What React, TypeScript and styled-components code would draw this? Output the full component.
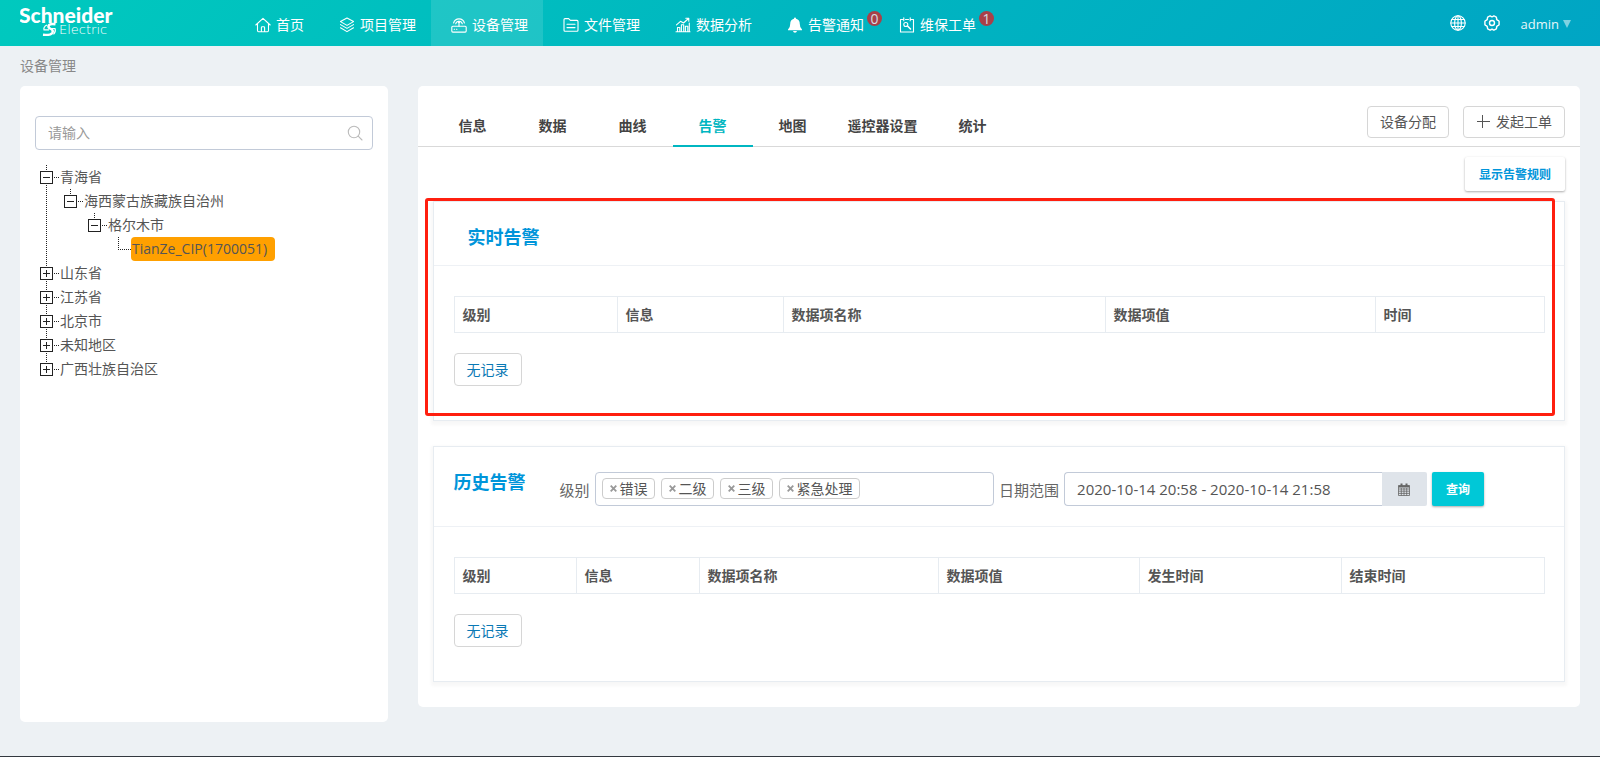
import React from "react";
import styled, { createGlobalStyle } from "styled-components";

const GlobalStyle = createGlobalStyle`
  * { box-sizing: border-box; }
  body {
    margin: 0;
    background: #edf1f4;
    color: #555;
    font: 14px/20px "Open Sans", "Noto Sans CJK SC", sans-serif;
  }
  button, input { font: inherit; color: inherit; }
  button { cursor: pointer; }
  a { color: inherit; text-decoration: none; }
  h2, ul { margin: 0; padding: 0; }
  ul { list-style: none; }
`;

/* ---------- page frame ---------- */

const Page = styled.div`
  min-height: 100vh;
  display: flex;
  flex-direction: column;
`;

const Header = styled.header`
  height: 46px;
  display: flex;
  align-items: stretch;
  padding: 0 29px 0 20px;
  color: #fff;
  background: linear-gradient(135deg, #00c9be 0%, #00b6c0 50%, #00a5c4 100%);
`;

const Brand = styled.a`
  width: 215px;
  flex: none;
`;

const Nav = styled.nav`
  display: flex;
  flex: 1;
`;

const NavLink = styled.a<{ $active?: boolean }>`
  display: flex;
  align-items: center;
  gap: 5px;
  padding: 4px 15px 0 20px;
  white-space: nowrap;
  background: ${(p) => (p.$active ? "rgba(255, 255, 255, 0.12)" : "none")};
  svg { flex: none; }
`;

const NavLabel = styled.span`
  position: relative;
`;

const Badge = styled.span`
  position: absolute;
  left: 100%;
  top: -4px;
  margin-left: 3px;
  width: 15px;
  height: 15px;
  border-radius: 8px;
  background: #a94048;
  color: #d5dde2;
  font-size: 14px;
  line-height: 15px;
  text-align: center;
`;

const UserTools = styled.div`
  display: flex;
  align-items: center;
  gap: 18px;
`;

const IconButton = styled.button`
  display: flex;
  padding: 0;
  border: 0;
  background: none;
  color: #fff;
`;

const UserMenu = styled(IconButton)`
  align-items: center;
  gap: 4px;
  padding-top: 2px;
  margin-left: 3px;
  font-size: 13px;
  color: #e6f7fa;
`;

const Breadcrumb = styled.div`
  padding: 10px 20px;
  color: #888;
`;

const Columns = styled.main`
  flex: 1;
  display: grid;
  grid-template-columns: minmax(0, 1fr) minmax(0, 3fr);
  align-items: start;
  padding: 0 5px;
`;

const Column = styled.div`
  padding: 0 15px;
`;

const Sidebar = styled.aside`
  min-height: calc(100vh - 121px);
  padding: 30px 15px;
  border-radius: 5px;
  background: #fff;
`;

const Footer = styled.footer`
  height: 1px;
  background: #33383f;
`;

/* ---------- device tree ---------- */

const SearchBox = styled.label`
  display: flex;
  align-items: center;
  height: 34px;
  margin-bottom: 15px;
  padding: 0 9px 0 12px;
  border: 1px solid #c2cad8;
  border-radius: 4px;
  color: #bbb;
`;

const SearchInput = styled.input`
  flex: 1;
  min-width: 0;
  padding: 0;
  border: 0;
  outline: 0;
  color: #555;
  &::placeholder { color: #999; opacity: 1; }
`;

const dots = (dir: string) =>
  `repeating-linear-gradient(${dir}, #222 0 1px, transparent 1px 2px)`;

const TreeList = styled.ul`
  padding: 0;
`;

const Branch = styled.li<{ $last?: boolean }>`
  background: ${dots("to bottom")} 11px 0 / 1px ${(p) => (p.$last ? "12px" : "100%")} no-repeat;
  & > ul { padding-left: 24px; }
`;

const Row = styled.div`
  display: flex;
  height: 24px;
  line-height: 24px;
`;

const Joint = styled.span`
  flex: none;
  width: 24px;
  height: 24px;
  padding: 6px 0 0 5px;
  background: ${dots("to right")} 11px 12px / 13px 1px no-repeat;
`;

const Toggle = styled.button`
  display: block;
  width: 14px;
  height: 13px;
  padding: 0;
  border: 0;
  background: #fff;
  svg { display: block; }
`;

const NodeLink = styled.a<{ $selected?: boolean }>`
  padding: 0 8px 0 1px;
  border-radius: 4px;
  white-space: nowrap;
  background: ${(p) => (p.$selected ? "#ffa000" : "none")};
`;

type TreeNode = { name: string; open?: boolean; selected?: boolean; children?: TreeNode[] };

const regions: TreeNode[] = [
  {
    name: "青海省",
    open: true,
    children: [
      {
        name: "海西蒙古族藏族自治州",
        open: true,
        children: [
          {
            name: "格尔木市",
            open: true,
            children: [{ name: "TianZe_CIP(1700051)", selected: true }],
          },
        ],
      },
    ],
  },
  { name: "山东省", children: [] },
  { name: "江苏省", children: [] },
  { name: "北京市", children: [] },
  { name: "未知地区", children: [] },
  { name: "广西壮族自治区", children: [] },
];

function Tree({ nodes }: { nodes: TreeNode[] }) {
  return (
    <TreeList>
      {nodes.map((node, i) => (
        <Branch key={node.name} $last={i === nodes.length - 1}>
          <Row>
            <Joint>
              {node.children && (
                <Toggle aria-label={node.open ? "收起" : "展开"} aria-expanded={!!node.open}>
                  <svg width="13" height="13" viewBox="0 0 13 13" stroke="#222" fill="none" shapeRendering="crispEdges">
                    <rect x=".5" y=".5" width="12" height="12" />
                    <path d={node.open ? "M3 6.5h7" : "M3 6.5h7M6.5 3v7"} />
                  </svg>
                </Toggle>
              )}
            </Joint>
            <NodeLink href="#" $selected={node.selected}>{node.name}</NodeLink>
          </Row>
          {node.open && node.children && <Tree nodes={node.children} />}
        </Branch>
      ))}
    </TreeList>
  );
}

/* ---------- main panel ---------- */

const Panel = styled.section`
  padding-bottom: 25px;
  border-radius: 5px;
  background: #fff;
`;

const TabBar = styled.div`
  display: flex;
  justify-content: space-between;
  height: 61px;
  padding: 0 15px;
  border-bottom: 1px solid #d9d9d9;
`;

const Tabs = styled.div`
  display: flex;
  margin-bottom: -1px;
`;

const Tab = styled.button<{ $active?: boolean }>`
  min-width: 80px;
  padding: 20px 15px 0;
  border: 0;
  border-bottom: 2px solid ${(p) => (p.$active ? "#00b6c1" : "transparent")};
  background: none;
  color: ${(p) => (p.$active ? "#00b6c1" : "#444")};
  font-weight: 600;
`;

const Actions = styled.div`
  display: flex;
  gap: 14px;
  padding-top: 20px;
`;

const OutlineButton = styled.button`
  display: flex;
  align-items: center;
  gap: 6px;
  height: 32px;
  padding: 0 12px;
  border: 1px solid #d6d6d6;
  border-radius: 4px;
  background: #fff;
  color: #555;
`;

const EmptyButton = styled(OutlineButton)`
  height: 33px;
  color: #0a79b5;
`;

const RaisedButton = styled.button<{ $primary?: boolean }>`
  height: 34px;
  padding: 2px 14px 0;
  border: 0;
  border-radius: 2px;
  background: ${(p) => (p.$primary ? "#00c8d7" : "#fff")};
  color: ${(p) => (p.$primary ? "#fff" : "#0095da")};
  font-size: 12px;
  font-weight: 700;
  white-space: nowrap;
  box-shadow: 0 1px 3px rgba(0, 0, 0, 0.15), 0 1px 2px rgba(0, 0, 0, 0.2);
`;

const RuleBar = styled.div`
  display: flex;
  justify-content: flex-end;
  padding: 10px 15px;
`;

const Card = styled.section`
  position: relative;
  margin: 0 15px;
  border: 1px solid #e7ecf1;
  box-shadow: 0 2px 3px 2px rgba(0, 0, 0, 0.03);
  & + & { margin-top: 25px; }
`;

const Marker = styled.div`
  position: absolute;
  inset: -4px 9px 4px -9px;
  border: 3px solid #ff1f0f;
  border-radius: 3px;
  pointer-events: none;
`;

const CardHeader = styled.div`
  display: flex;
  align-items: center;
  height: 64px;
  padding: 6px 34px 0;
  border-bottom: 1px solid #eef1f5;
`;

const FilterHeader = styled(CardHeader)`
  height: 80px;
  align-items: flex-start;
  padding: 25px 80px 0 20px;
`;

const CardTitle = styled.h2`
  flex: none;
  color: #0095da;
  font-size: 18px;
  line-height: 20px;
  font-weight: 700;
`;

const CardBody = styled.div`
  padding: 30px 20px 34px;
`;

const DataTable = styled.table`
  width: 100%;
  margin-bottom: 20px;
  table-layout: fixed;
  border-collapse: collapse;
`;

const HeadCell = styled.th`
  height: 36px;
  padding: 0 8px;
  border: 1px solid #e7ecf1;
  text-align: left;
  font-weight: 700;
`;

const Filters = styled.form`
  flex: 1;
  display: flex;
  gap: 5px;
  margin-left: 34px;
`;

const FilterLabel = styled.label`
  flex: none;
  padding-top: 8px;
  font-size: 15px;
  color: #666;
`;

const TagBox = styled.div`
  flex: 17 1 0;
  min-width: 0;
  display: flex;
  align-items: flex-start;
  gap: 6px;
  height: 34px;
  padding: 5px 6px;
  border: 1px solid #c2cad8;
  border-radius: 4px;
`;

const Tag = styled.span`
  flex: none;
  display: flex;
  align-items: center;
  gap: 3px;
  height: 21px;
  padding: 0 6px 0 7px;
  border: 1px solid #ccc;
  border-radius: 4px;
`;

const TagRemove = styled.button`
  display: flex;
  padding: 0;
  border: 0;
  background: none;
`;

const TagInput = styled.input`
  flex: 1;
  min-width: 0;
  height: 21px;
  padding: 0;
  border: 0;
  outline: 0;
`;

const DateGroup = styled.div`
  flex: 16 1 0;
  min-width: 0;
  display: flex;
  height: 34px;
`;

const DateInput = styled.input`
  flex: 1;
  min-width: 0;
  padding: 0 12px;
  border: 1px solid #c2cad8;
  border-right: 0;
  border-radius: 4px 0 0 4px;
  outline: 0;
  font-size: 15px;
`;

const DateButton = styled.button`
  flex: none;
  width: 45px;
  display: flex;
  align-items: center;
  justify-content: center;
  padding: 0;
  border: 0;
  border-radius: 0 2px 2px 0;
  background: #dfe4ea;
`;

type Col = { title: string; width: number };

const liveColumns: Col[] = [
  { title: "级别", width: 163 },
  { title: "信息", width: 166 },
  { title: "数据项名称", width: 322 },
  { title: "数据项值", width: 270 },
  { title: "时间", width: 169 },
];

const historyColumns: Col[] = [
  { title: "级别", width: 122 },
  { title: "信息", width: 123 },
  { title: "数据项名称", width: 239 },
  { title: "数据项值", width: 201 },
  { title: "发生时间", width: 202 },
  { title: "结束时间", width: 203 },
];

function AlarmTable({ columns }: { columns: Col[] }) {
  return (
    <DataTable>
      <colgroup>
        {columns.map((c) => <col key={c.title} width={c.width} />)}
      </colgroup>
      <thead>
        <tr>
          {columns.map((c) => <HeadCell key={c.title} scope="col">{c.title}</HeadCell>)}
        </tr>
      </thead>
    </DataTable>
  );
}

/* ---------- icons ---------- */

const Glyph = ({ children }: { children: React.ReactNode }) => (
  <svg width="16" height="16" viewBox="0 0 16 16" fill="none" stroke="currentColor" strokeWidth="1.1" strokeLinejoin="round" strokeLinecap="round" aria-hidden="true">
    {children}
  </svg>
);

const HomeIcon = () => (
  <Glyph><path d="M.8 8 8 1.3 15.2 8M2.5 6.6V13.6q0 1.100 1.100 1.100h8.800q1.100 0 1.100-1.100V6.600M6.400 14.500V10.500q0-.8.8-.8h1.600q.8 0 .8.8V14.500" /></Glyph>
);
const LayersIcon = () => (
  <Glyph><path d="M8 1 14.500 4.600 8 8.400 1.500 4.600ZM1.500 7.600 8 11.400l6.500-3.800M1.500 10.800 8 14.600l6.500-3.800" /></Glyph>
);
const RouterIcon = () => (
  <Glyph>
    <rect x=".8" y="9.300" width="14.400" height="5.800" rx="1" />
    <path d="M8 9.300V5.500M3.200 12.300h.4M5.500 12.300h.4M2.600 6a5.600 5.600 0 0 1 10.800 0M4.700 6.800a3.400 3.400 0 0 1 6.600 0" />
    <circle cx="8" cy="5" r=".8" fill="currentColor" />
  </Glyph>
);
const FolderIcon = () => (
  <Glyph><path d="M1 13.300V2.600Q1 1.600 2 1.600H5.600L7.400 3.400H14q1 0 1 1V13.300q0 1-1 1H2q-1 0-1-1ZM4 7.200h8M4 10.600h8" /></Glyph>
);
const ChartIcon = () => (
  <Glyph><path d="M1 14.800h14M2.500 14.500V10.500H4.800V14.500M6.400 14.500V7.800H8.700V14.500M10.400 14.500V9.300h2.400V14.500M14.300 14.500V6M1.500 7.800 5.500 4.300 8.500 6 13.500 1.500M10.800 1.300h3V4.200" /></Glyph>
);
const BellIcon = () => (
  <Glyph><path fill="currentColor" stroke="none" d="M8 .5q1 0 1.100 1.200 3.700 1 3.700 5.300 0 3.800 2.200 5.600v.6H1v-.6Q3.200 10.800 3.200 7q0-4.300 3.700-5.300Q7 .5 8 .5ZM6 14h4q-.4 1.800-2 1.800T6 14Z" /></Glyph>
);
const RepairIcon = () => (
  <Glyph><path d="M4 2.500H1.500V15h13V2.500H12M6.500 2.500h3M4.800.8v3M11.200.8v3" /><circle cx="6.800" cy="7.500" r="2" /><path strokeWidth="1.600" d="m8.500 9 3 3" /></Glyph>
);
const GlobeIcon = () => (
  <Glyph><circle cx="8" cy="8" r="7.200" /><ellipse cx="8" cy="8" rx="3.400" ry="7.200" /><path d="M8 .8v14.400M.8 8h14.400M1.800 4.500h12.400M1.800 11.500h12.400" /></Glyph>
);
const GearIcon = () => (
  <svg width="16" height="16" viewBox="0 0 16 16" fill="none" stroke="currentColor" strokeWidth="1.400" strokeLinejoin="round" aria-hidden="true">
    <path d="M5.700 1H6.500Q8 2.600 9.500 1h.8l2 1.200.3.900Q12.200 5 14.400 5.600l.7.600v3.600l-.7.600Q12.200 11 12.600 12.900l-.3.900-2 1.200h-.8Q8 13.400 6.500 15h-.8l-2-1.200-.3-.9Q3.800 11 1.600 10.400l-.7-.6V6.200l.7-.6Q3.800 5 3.400 3.100l.3-.9Z" />
    <circle cx="8" cy="8" r="2.500" />
  </svg>
);
const SearchIcon = () => (
  <Glyph><circle cx="7" cy="7" r="5.700" /><path d="m11.200 11.200 3.800 3.800" /></Glyph>
);
const PlusIcon = () => (
  <svg width="14" height="14" viewBox="0 0 14 14" stroke="currentColor" shapeRendering="crispEdges" aria-hidden="true"><path d="M.5 6.500h13M6.500 0v13" /></svg>
);
const CalendarIcon = () => (
  <svg width="12" height="13" viewBox="0 0 12 13" fill="none" stroke="#666" aria-hidden="true">
    <path d="M.5 2.500h11v10H.5ZM.5 6h11M.5 8.200h11M.5 10.400h11M3.300 5v7.500M6 5v7.500M8.700 5v7.500" strokeWidth=".8" />
    <path d="M.5 3.500h11M3.500.5v2.500M8.500.5v2.500" strokeWidth="2" />
  </svg>
);
const CrossIcon = () => (
  <svg width="7" height="7" viewBox="0 0 7 7" stroke="#999" strokeWidth="1.800" aria-hidden="true"><path d="m.7.7 5.600 5.600M6.300.7.7 6.300" /></svg>
);
const Logo = () => (
  <svg width="96" height="46" viewBox="0 0 96 46" fill="#fff" role="img" aria-label="Schneider Electric">
    <text x="-1" y="23" fontFamily="Lato, sans-serif" fontWeight="900" fontSize="21">Schneider</text>
    <text x="39" y="34" fontFamily="DejaVu Sans, sans-serif" fontWeight="200" fontSize="13">Electric</text>
    <g fill="none" stroke="#fff">
      <path strokeWidth="2.400" d="M35.500 24.300Q29.500 23.300 28.500 26 28 27.800 31 29 33.500 30.200 32.500 32.400 31 35.500 23 34.800" />
      <path strokeWidth="1.200" d="M27 25Q23.200 26.800 24 29.800H29M33.500 34.300Q36.200 31.500 35 28.500H31" />
    </g>
  </svg>
);

const navItems = [
  { label: "首页", icon: <HomeIcon /> },
  { label: "项目管理", icon: <LayersIcon /> },
  { label: "设备管理", icon: <RouterIcon />, active: true },
  { label: "文件管理", icon: <FolderIcon /> },
  { label: "数据分析", icon: <ChartIcon /> },
  { label: "告警通知", icon: <BellIcon />, badge: 0 },
  { label: "维保工单", icon: <RepairIcon />, badge: 1 },
];

const tabs = ["信息", "数据", "曲线", "告警", "地图", "遥控器设置", "统计"];
const levels = ["错误", "二级", "三级", "紧急处理"];

export default function App() {
  return (
    <Page>
      <GlobalStyle />
      <Header>
        <Brand href="#"><Logo /></Brand>
        <Nav>
          {navItems.map((item) => (
            <NavLink key={item.label} href="#" $active={item.active}>
              {item.icon}
              <NavLabel>
                {item.label}
                {item.badge !== undefined && <Badge>{item.badge}</Badge>}
              </NavLabel>
            </NavLink>
          ))}
        </Nav>
        <UserTools>
          <IconButton aria-label="语言"><GlobeIcon /></IconButton>
          <IconButton aria-label="设置"><GearIcon /></IconButton>
          <UserMenu>
            admin
            <svg width="8" height="8" viewBox="0 0 8 8" fill="#fff" opacity=".5" aria-hidden="true"><path d="M0 0h8L4 8Z" /></svg>
          </UserMenu>
        </UserTools>
      </Header>
      <Breadcrumb>设备管理</Breadcrumb>
      <Columns>
        <Column>
          <Sidebar>
            <SearchBox>
              <SearchInput placeholder="请输入" aria-label="请输入" />
              <SearchIcon />
            </SearchBox>
            <Tree nodes={regions} />
          </Sidebar>
        </Column>
        <Column>
          <Panel>
            <TabBar>
              <Tabs role="tablist">
                {tabs.map((t) => (
                  <Tab key={t} role="tab" aria-selected={t === "告警"} $active={t === "告警"}>{t}</Tab>
                ))}
              </Tabs>
              <Actions>
                <OutlineButton>设备分配</OutlineButton>
                <OutlineButton><PlusIcon />发起工单</OutlineButton>
              </Actions>
            </TabBar>
            <RuleBar><RaisedButton>显示告警规则</RaisedButton></RuleBar>
            <Card>
              <CardHeader><CardTitle>实时告警</CardTitle></CardHeader>
              <CardBody>
                <AlarmTable columns={liveColumns} />
                <EmptyButton>无记录</EmptyButton>
              </CardBody>
              <Marker />
            </Card>
            <Card>
              <FilterHeader>
                <CardTitle>历史告警</CardTitle>
                <Filters onSubmit={(e) => e.preventDefault()}>
                  <FilterLabel htmlFor="level">级别</FilterLabel>
                  <TagBox>
                    {levels.map((l) => (
                      <Tag key={l}>
                        <TagRemove type="button" aria-label={`移除${l}`}><CrossIcon /></TagRemove>
                        {l}
                      </Tag>
                    ))}
                    <TagInput id="level" />
                  </TagBox>
                  <FilterLabel htmlFor="range">日期范围</FilterLabel>
                  <DateGroup>
                    <DateInput id="range" defaultValue="2020-10-14 20:58 - 2020-10-14 21:58" />
                    <DateButton type="button" aria-label="选择日期"><CalendarIcon /></DateButton>
                  </DateGroup>
                  <RaisedButton $primary>查询</RaisedButton>
                </Filters>
              </FilterHeader>
              <CardBody>
                <AlarmTable columns={historyColumns} />
                <EmptyButton>无记录</EmptyButton>
              </CardBody>
            </Card>
          </Panel>
        </Column>
      </Columns>
      <Footer />
    </Page>
  );
}
